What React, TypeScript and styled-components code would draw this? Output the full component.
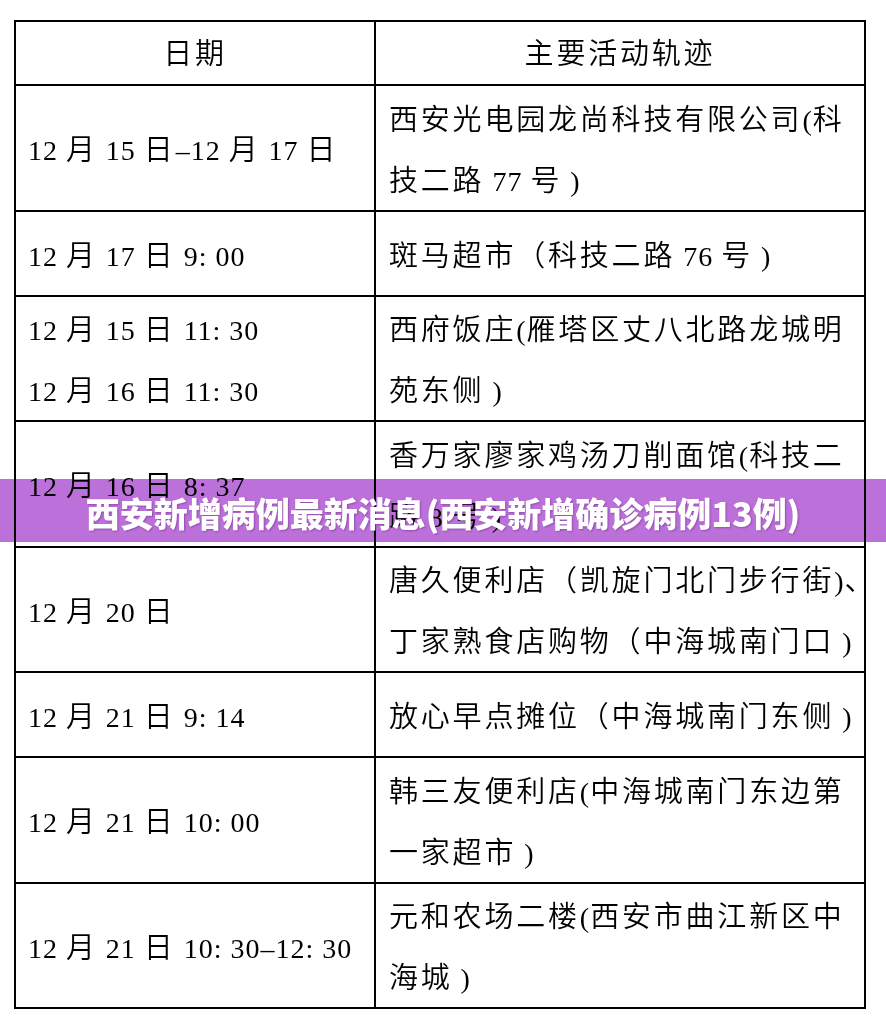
import styled, { createGlobalStyle } from 'styled-components';

const GlobalStyle = createGlobalStyle`
  html, body {
    margin: 0;
    padding: 0;
    background: #fff;
  }
  body {
    font-family: "Liberation Serif", "Noto Sans CJK SC", serif;
  }
`;

interface Row {
  date: string[];
  place: string[];
}

const rows: Row[] = [
  { date: ['12 月 15 日–12 月 17 日'], place: ['西安光电园龙尚科技有限公司(科', '技二路 77 号 )'] },
  { date: ['12 月 17 日 9: 00'], place: ['斑马超市（科技二路 76 号 )'] },
  { date: ['12 月 15 日 11: 30', '12 月 16 日 11: 30'], place: ['西府饭庄(雁塔区丈八北路龙城明', '苑东侧 )'] },
  { date: ['12 月 16 日 8: 37'], place: ['香万家廖家鸡汤刀削面馆(科技二', '路 8 号 )'] },
  { date: ['12 月 20 日'], place: ['唐久便利店（凯旋门北门步行街)、', '丁家熟食店购物（中海城南门口 )'] },
  { date: ['12 月 21 日 9: 14'], place: ['放心早点摊位（中海城南门东侧 )'] },
  { date: ['12 月 21 日 10: 00'], place: ['韩三友便利店(中海城南门东边第', '一家超市 )'] },
  { date: ['12 月 21 日 10: 30–12: 30'], place: ['元和农场二楼(西安市曲江新区中', '海城 )'] },
];

const HAN = /([\u3000-\u303f\u4e00-\u9fff\uff00-\uffef]+)/;

// CJK runs get their own font and wider tracking, like the Song face in the scan
const Mixed = ({ text }: { text: string }) => (
  <>
    {text.split(HAN).filter(Boolean).map((run, i) =>
      HAN.test(run) ? <Han key={i}>{run}</Han> : <span key={i}>{run}</span>
    )}
  </>
);

const App = () => (
  <>
    <GlobalStyle />
    <Page>
      <Table>
        <colgroup>
          <col style={{ width: 360 }} />
          <col style={{ width: 490 }} />
        </colgroup>
        <thead>
          <tr>
            <HeadCell><Mixed text="日期" /></HeadCell>
            <HeadCell><Mixed text="主要活动轨迹" /></HeadCell>
          </tr>
        </thead>
        <tbody>
          {rows.map((row, i) => (
            <tr key={i}>
              <Cell>
                {row.date.map((line, j) => (
                  <Line key={j}><Mixed text={line} /></Line>
                ))}
              </Cell>
              <Cell $right>
                {row.place.map((line, j) => (
                  <Line key={j}><Mixed text={line} /></Line>
                ))}
              </Cell>
            </tr>
          ))}
        </tbody>
      </Table>
      <Banner>
        <BannerText>西安新增病例最新消息(西安新增确诊病例13例)</BannerText>
      </Banner>
    </Page>
  </>
);

const Page = styled.div`
  position: relative;
  width: 886px;
  height: 1022px;
  overflow: hidden;
  padding: 20px 0 0 14px;
  box-sizing: border-box;
`;

const Table = styled.table`
  width: 850px;
  table-layout: fixed;
  border-collapse: collapse;
  color: #000;
  font-size: 28px;
`;

const HeadCell = styled.th`
  border: 2px solid #000;
  height: 62px;
  padding: 0;
  font-weight: normal;
  text-align: center;
  line-height: 40px;
  letter-spacing: 1px;
`;

const Cell = styled.td<{ $right?: boolean }>`
  border: 2px solid #000;
  height: 81.5px;
  padding: 0.75px 0 0.75px ${({ $right }) => ($right ? 13 : 12)}px;
  vertical-align: middle;
  text-align: left;
  white-space: nowrap;
  overflow: hidden;
  letter-spacing: 1px;
`;

const Line = styled.div`
  height: 61px;
  line-height: 61px;
`;

const Han = styled.span`
  font-family: "Noto Sans CJK SC", sans-serif;
  font-weight: 350;
  font-size: 29px;
  letter-spacing: 2.8px;
`;

const Banner = styled.div`
  position: absolute;
  left: 0;
  right: 0;
  top: 479px;
  height: 63px;
  display: flex;
  align-items: center;
  justify-content: center;
  padding-top: 5px;
  box-sizing: border-box;

  &::before {
    content: '';
    position: absolute;
    inset: 0;
    background: #bc71da;
    mix-blend-mode: multiply;
  }
`;

const BannerText = styled.span`
  position: relative;
  color: #fff;
  font-family: "Noto Sans CJK SC", sans-serif;
  font-weight: 900;
  font-size: 34px;
  line-height: 40px;
  text-shadow: 1px 1px 2px rgba(70, 10, 90, 0.35);
`;

export default App;
